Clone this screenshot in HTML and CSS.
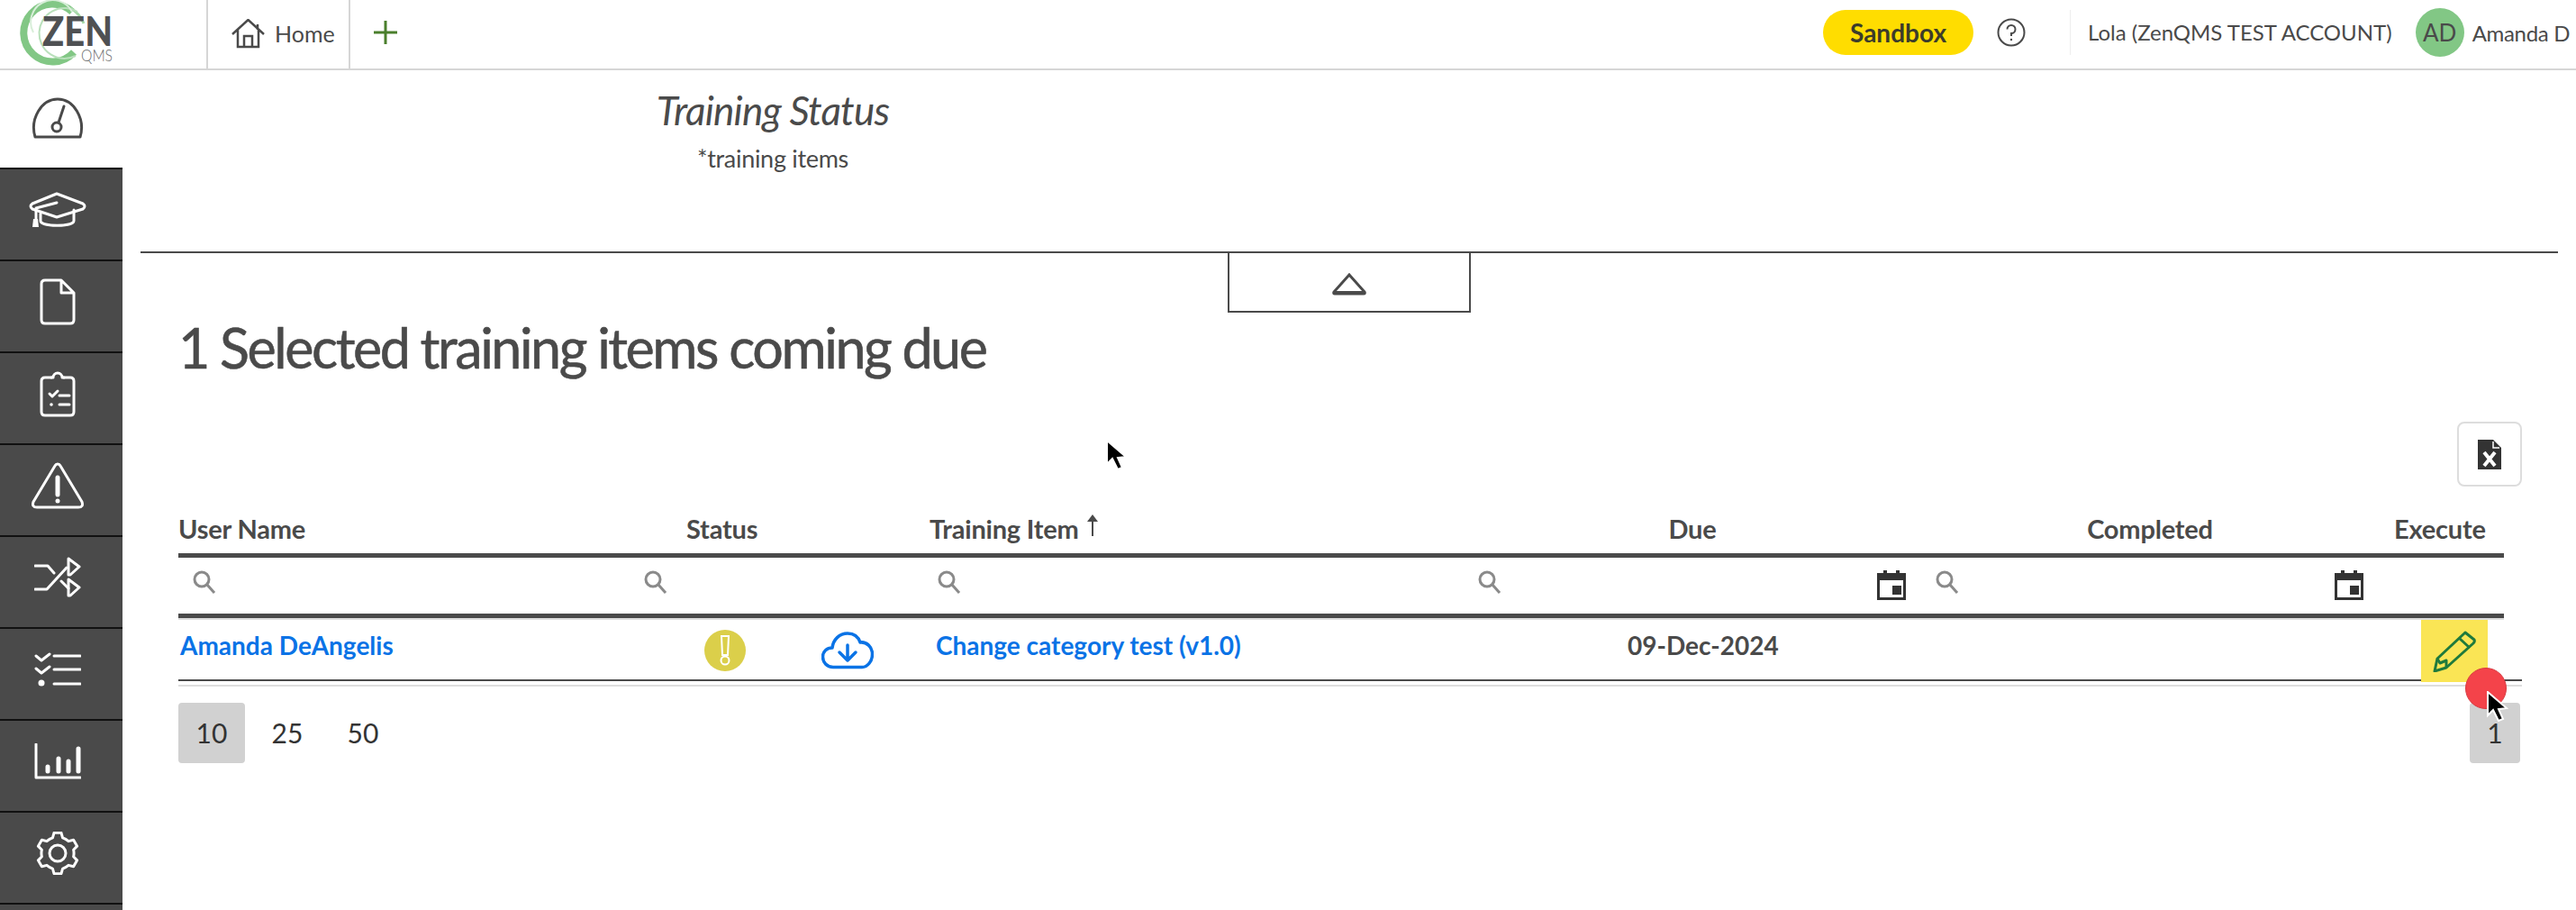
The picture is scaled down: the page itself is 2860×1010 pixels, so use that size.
FILE: index.html
```html
<!DOCTYPE html>
<html lang="en">
<head>
<meta charset="utf-8">
<title>Training Status</title>
<link rel="stylesheet" href="styles.css">
</head>
<body>
<header class="topbar">
  <div class="logo">
    <svg class="logo-mark" width="130" height="74" viewBox="0 0 130 74">
      <path class="ring-a" d="M80 13 A32 32 0 1 0 82 58"/>
      <path class="ring-d" d="M78 9 A33 33 0 0 1 93 26"/>
      <path class="ring-b" d="M86 13 A28 28 0 1 0 84 62"/>
      <path class="ring-c" d="M80 13 A24 24 0 0 0 37 36"/>
      <text class="logo-zen" x="47" y="51" textLength="78" lengthAdjust="spacingAndGlyphs">ZEN</text>
      <text class="logo-qms" x="90" y="68" textLength="35" lengthAdjust="spacingAndGlyphs">QMS</text>
    </svg>
  </div>
  <div class="tab">
    <svg class="tab-icon" width="37" height="33" viewBox="0 0 37 33"><path d="M1 17 L18.500 1 L36 17 M7 12 V31 H30 V12 M14 31 V19 H23 V31 M29 6 V12"/></svg>
    <span>Home</span>
  </div>
  <div class="tab-add">
    <svg width="28" height="28" viewBox="0 0 28 28"><path d="M14 1 V27 M1 14 H27"/></svg>
  </div>
  <div class="top-right">
    <span class="sandbox">Sandbox</span>
    <svg class="help" width="32" height="32" viewBox="0 0 32 32"><circle cx="16" cy="16" r="14.5"/><path d="M11.500 12.500 A4.500 4.500 0 1 1 16 17 V20"/><circle class="help-dot" cx="16" cy="24" r="1.200"/></svg>
    <span class="account">Lola (ZenQMS TEST ACCOUNT)</span>
    <span class="avatar">AD</span>
    <span class="username">Amanda D</span>
  </div>
</header>

<div class="layout">
  <nav class="sidebar">
    <div class="nav-home">
      <svg class="ico-dark" width="58" height="46" viewBox="0 0 58 46"><path d="M4 44 C-2 24 11 2 29 2 C47 2 60 24 54 44 Z"/><circle cx="28" cy="33" r="5"/><path d="M30 28 L36 10"/></svg>
    </div>
    <div class="nav-item">
      <svg class="ico" width="64" height="40" viewBox="0 0 64 40"><path d="M31 2 L60 13 Q64 16 60 19 L31 28 L4 19 Q0 16 4 13 Z"/><path d="M31 12 L8 18 V36"/><path d="M13 24 V32 C13 39 50 39 50 32 V20"/><path class="fill" d="M5 30 H10 L11 39 H4 Z"/></svg>
    </div>
    <div class="nav-item">
      <svg class="ico" width="40" height="52" viewBox="0 0 40 52"><path d="M24 2 H6 Q2 2 2 6 V46 Q2 50 6 50 H34 Q38 50 38 46 V16 Z M24 2 V16 H38"/></svg>
    </div>
    <div class="nav-item">
      <svg class="ico" width="40" height="52" viewBox="0 0 40 52"><path d="M13 8 H6 Q2 8 2 12 V46 Q2 50 6 50 H34 Q38 50 38 46 V12 Q38 8 34 8 H27"/><path d="M13 8 H15 A5 5 0 0 1 25 8 H27"/><path d="M11 26 L14 29 L20 23 M22 28 H33 M22 38 H33"/><circle class="fill" cx="13" cy="38" r="1.800"/></svg>
    </div>
    <div class="nav-item">
      <svg class="ico" width="58" height="52" viewBox="0 0 58 52"><path d="M29 2 Q31 2 32 4 L56 44 Q58 50 52 50 H6 Q0 50 2 44 L26 4 Q27 2 29 2 Z"/><path class="thick" d="M29 17 V36"/><circle class="fill" cx="29" cy="43" r="2.500"/></svg>
    </div>
    <div class="nav-item">
      <svg class="ico" width="52" height="46" viewBox="0 0 52 46"><path d="M1 10 H15 L22 18 M1 36 H14 L36 12 M30 27 L38 35"/><path d="M38 2 L50 11 L40 20 L38 20 Z M38 25 L50 34 L40 43 L38 43 Z"/></svg>
    </div>
    <div class="nav-item">
      <svg class="ico" width="52" height="40" viewBox="0 0 52 40"><path d="M2 5 L8 10 L17 3 M2 19 L8 24 L17 17 M22 5 H51 M22 20 H51 M22 36 H51"/><circle class="fill" cx="8" cy="35" r="3.500"/></svg>
    </div>
    <div class="nav-item">
      <svg class="ico" width="52" height="40" viewBox="0 0 52 40"><path d="M2 1 V38 H51"/><path class="thick" d="M15 26 V31 M27 17 V31 M38 20 V31 M49 6 V31"/></svg>
    </div>
    <div class="nav-item">
      <svg class="ico" width="48" height="48" viewBox="0 0 48 48"><path d="M18.440 6.880 L20.010 1.350 H27.990 L29.560 6.880 Q33 8 36.040 10.620 L41.620 9.220 L45.610 16.130 L41.610 20.260 Q42.500 24 41.610 27.740 L45.610 31.870 L41.620 38.780 L36.040 37.380 Q33 40 29.560 41.120 L27.990 46.650 H20.010 L18.440 41.120 Q15 40 11.960 37.380 L6.380 38.780 L2.390 31.870 L6.390 27.740 Q5.500 24 6.390 20.260 L2.390 16.130 L6.380 9.220 L11.960 10.620 Q15 8 18.440 6.880 Z"/><circle cx="24" cy="24" r="9"/></svg>
    </div>
    <div class="nav-item"></div>
  </nav>

  <main class="main">
    <section class="panel">
      <div class="chart-head">
        <h2 class="chart-title">Training Status</h2>
        <p class="chart-sub">*training items</p>
      </div>
    </section>
    <button class="collapse" type="button" aria-label="Collapse">
      <svg width="40" height="26" viewBox="0 0 40 26"><path d="M20 3 L37 22 Q38 24 36 24 H4 Q2 24 3 22 Z"/><path class="fill" d="M2 21 H38 V25 H2 Z"/></svg>
    </button>

    <section class="content">
      <h1 class="heading">1 Selected training items coming due</h1>
      <div class="toolbar">
        <button class="excel" type="button" aria-label="Export">
          <svg width="26" height="33" viewBox="0 0 26 33"><path class="excel-doc" d="M0 0 H17 L26 9 V33 H0 Z"/><path class="excel-fold" d="M17 2 V9 H24"/><path class="excel-x" d="M7 14 L19 29 M19 14 L7 29"/></svg>
        </button>
      </div>

      <div class="grid-row head-row">
        <div class="th">User Name</div>
        <div class="th th-status">Status</div>
        <div class="th th-item">Training Item <svg class="sort" width="12" height="24" viewBox="0 0 12 24"><path d="M6 24 V6"/><path class="fill" d="M6 0 L12 8 H0 Z"/></svg></div>
        <div class="th th-center">Due</div>
        <div class="th th-center">Completed</div>
        <div class="th th-exec">Execute</div>
      </div>

      <div class="grid-row filter-row">
        <div class="filter"><svg class="search" width="26" height="26" viewBox="0 0 26 26"><circle cx="10" cy="10" r="8"/><path d="M16 16 L24 25"/></svg></div>
        <div class="filter"><svg class="search" width="26" height="26" viewBox="0 0 26 26"><circle cx="10" cy="10" r="8"/><path d="M16 16 L24 25"/></svg></div>
        <div class="filter"><svg class="search" width="26" height="26" viewBox="0 0 26 26"><circle cx="10" cy="10" r="8"/><path d="M16 16 L24 25"/></svg></div>
        <div class="filter filter-date"><svg class="search" width="26" height="26" viewBox="0 0 26 26"><circle cx="10" cy="10" r="8"/><path d="M16 16 L24 25"/></svg><svg class="cal" width="34" height="34" viewBox="0 0 34 34"><path d="M1 3 H8 V0 H12 V3 H22 V0 H26 V3 H33 V33 H1 Z M4 11 V30 H30 V11 Z M18 17 H28 V27 H18 Z" fill-rule="evenodd"/></svg></div>
        <div class="filter filter-date"><svg class="search" width="26" height="26" viewBox="0 0 26 26"><circle cx="10" cy="10" r="8"/><path d="M16 16 L24 25"/></svg><svg class="cal" width="34" height="34" viewBox="0 0 34 34"><path d="M1 3 H8 V0 H12 V3 H22 V0 H26 V3 H33 V33 H1 Z M4 11 V30 H30 V11 Z M18 17 H28 V27 H18 Z" fill-rule="evenodd"/></svg></div>
        <div class="filter"></div>
      </div>

      <div class="grid-row body-row">
        <div class="td"><a class="link" href="#">Amanda DeAngelis</a></div>
        <div class="td td-status">
          <span class="status-dot"><svg width="16" height="36" viewBox="0 0 16 36"><path d="M4 2 H12 L11 23 H5 Z"/><circle cx="8" cy="29" r="4.500"/></svg></span>
          <svg class="cloud" width="58" height="42" viewBox="0 0 58 42"><path d="M13 39.500 C6 39.500 1.500 34 1.500 28 C1.500 22 6 18 12 18 C13 9 20 2 29 2 C36 2 41 6 43 12 C50 11 56.500 17 56.500 25 C56.500 33 51 39.500 45 39.500 Z"/><path d="M29 15 V32 M20 23 L29 32 L38 23"/></svg>
        </div>
        <div class="td td-item"><a class="link" href="#">Change category test (v1.0)</a></div>
        <div class="td td-due">09-Dec-2024</div>
        <div class="td"></div>
        <div class="td td-exec">
          <span class="exec-btn"><svg width="48" height="46" viewBox="0 0 48 46"><path d="M36 2 L46 10 Q47 12 45 14 L15 41 L2 45 L5 31 L35 3 Q36 2 36 2 Z"/><path d="M29 8 L41 19 M5 31 L8 36 L15 33 L15 41"/></svg></span>
        </div>
      </div>
      <div class="row-end"></div>

      <div class="pager">
        <div class="sizes">
          <span class="page page-on">10</span>
          <span class="page">25</span>
          <span class="page">50</span>
        </div>
        <span class="page page-on page-one">1</span>
      </div>
    </section>
  </main>
</div>

<svg class="cursor cursor-mid" width="25" height="36" viewBox="0 0 25 36"><path d="M2 1 V27 L8 21 L14 33 L19 31 L14 20 L23 19 Z"/></svg>
<div class="click-dot"></div>
<svg class="cursor cursor-click" width="25" height="36" viewBox="0 0 25 36"><path d="M2 1 V27 L8 21 L14 33 L19 31 L14 20 L23 19 Z"/></svg>
</body>
</html>
```

FILE: styles.css
```css
* { box-sizing: border-box; }
html, body { margin: 0; padding: 0; }
body {
  width: 2860px;
  height: 1010px;
  overflow: hidden;
  background: #fff;
  color: #4a4a4a;
  font-family: Lato, "Open Sans", sans-serif;
  position: relative;
}

.topbar {
  height: 78px;
  display: flex;
  align-items: stretch;
  border-bottom: 2px solid #d6d6d6;
  overflow: hidden;
}
.logo { width: 229px; flex: none; }
.logo-mark { display: block; }
.ring-a { fill: none; stroke: #82c785; stroke-width: 8; }
.ring-d { fill: none; stroke: #a5d8a7; stroke-width: 3; }
.ring-b { fill: none; stroke: #b9e0bb; stroke-width: 2; }
.ring-c { fill: none; stroke: #d8eed9; stroke-width: 2; }
.logo-zen { font: 900 45px Lato, sans-serif; fill: #4f5153; }
.logo-qms { font: 300 18px Lato, sans-serif; fill: #6a6c6e; }

.tab {
  width: 160px;
  flex: none;
  height: 78px;
  display: flex;
  align-items: center;
  gap: 11px;
  padding: 0 0 4px 26px;
  border-left: 2px solid #d6d6d6;
  border-right: 2px solid #d6d6d6;
  background: #fff;
  font-size: 25px;
  position: relative;
}
.tab-icon { fill: none; stroke: #4a4a4a; stroke-width: 2.500; flex: none; }
.tab-add { display: flex; align-items: center; padding: 0 0 4px 25px; }
.tab-add path { stroke: #4a7f2c; stroke-width: 3; fill: none; }

.top-right {
  margin-left: auto;
  display: flex;
  align-items: center;
  padding-bottom: 4px;
  width: 836px;
  flex: none;
  font-size: 24px;
  white-space: nowrap;
  overflow: hidden;
}
.sandbox {
  width: 167px;
  height: 50px;
  border-radius: 25px;
  background: #ffdd00;
  color: #3c3c2a;
  font-weight: 700;
  font-size: 28px;
  display: flex;
  align-items: center;
  justify-content: center;
  flex: none;
}
.help { margin-left: 26px; flex: none; fill: none; stroke: #4a4a4a; stroke-width: 2; }
.help-dot { fill: #4a4a4a; stroke: none; }
.account {
  margin-left: 49px;
  padding-left: 19px;
  border-left: 1px solid #eee;
  line-height: 50px;
  flex: none;
}
.avatar {
  width: 54px;
  height: 54px;
  margin-left: 26px;
  border-radius: 50%;
  background: #82c785;
  display: flex;
  align-items: center;
  justify-content: center;
  flex: none;
  font-size: 26px;
}
.username { margin-left: 9px; flex: none; letter-spacing: -0.3px; }

.layout { display: flex; height: 932px; }
.sidebar { width: 136px; flex: none; height: 932px; overflow: hidden; }
.nav-home {
  height: 108px;
  display: flex;
  align-items: center;
  justify-content: center;
  padding: 0 8px 2px 0;
}
.nav-item {
  height: 102px;
  background: #4a4a4a;
  border-top: 2px solid #111;
  display: flex;
  align-items: center;
  justify-content: center;
  padding: 0 8px 10px 0;
}
.ico, .ico-dark { fill: none; stroke-width: 3; stroke-linecap: round; stroke-linejoin: round; }
.ico { stroke: #fff; }
.ico-dark { stroke: #4a4a4a; }
.ico .fill { fill: #fff; stroke: none; }
.ico .thick { stroke-width: 5; }

.main { flex: 1; min-width: 0; }
.panel {
  margin: 0 20px 0 20px;
  height: 203px;
  border-bottom: 2px solid #4a4a4a;
}
.chart-head { width: 1404px; text-align: center; padding-top: 19px; }
.chart-title { margin: 0; font-size: 44px; line-height: 50px; font-weight: 400; font-style: italic; letter-spacing: -0.8px; }
.chart-sub { margin: 13px 0 0; font-size: 27px; line-height: 32px; letter-spacing: -0.3px; }

.collapse {
  display: flex;
  align-items: center;
  justify-content: center;
  margin: 0 auto;
  width: 270px;
  height: 66px;
  padding: 4px 0 0;
  background: #fff;
  border: 2px solid #4a4a4a;
  border-top: 0;
}
.collapse svg { fill: none; stroke: #4a4a4a; stroke-width: 3; }
.collapse .fill { fill: #4a4a4a; stroke: none; }

.content { margin-left: 62px; width: 2602px; }
.heading { margin: 2px 0 0; font-size: 61px; line-height: 74px; font-weight: 400; letter-spacing: -2.45px; -webkit-text-stroke: 0.6px #4a4a4a; }
.toolbar { display: flex; justify-content: flex-end; margin-top: 45px; }
.excel {
  width: 72px;
  height: 72px;
  background: #fff;
  border: 2px solid #ddd;
  border-radius: 8px;
  padding: 0;
  display: flex;
  align-items: center;
  justify-content: center;
}
.excel-doc { fill: #333; }
.excel-fold { fill: none; stroke: #fff; stroke-width: 1.500; }
.excel-x { stroke: #fff; stroke-width: 4; fill: none; }

.grid-row {
  display: grid;
  grid-template-columns: 501px 326px 600px 508px 508px 139px;
  width: 2582px;
}
.head-row {
  height: 79px;
  padding-top: 29px;
  border-bottom: 5px solid #4a4a4a;
  font-size: 29px;
  font-weight: 700;
  line-height: 36px;
  letter-spacing: -0.2px;
}
.th { white-space: nowrap; }
.th-status { padding-left: 63px; }
.th-item { padding-left: 7px; }
.sort { position: relative; top: -3px; left: 2px; fill: none; stroke: #4a4a4a; stroke-width: 2; }
.sort .fill { fill: #4a4a4a; stroke: none; }
.th-center { text-align: center; }
.th-exec { padding-left: 17px; }

.filter-row {
  height: 67px;
  border-bottom: 5px solid #4a4a4a;
  box-shadow: 0 2px 0 #ddd;
}
.filter { display: flex; align-items: center; justify-content: space-between; padding: 0 16px 8px 16px; }
.search { fill: none; stroke: #8a8a8a; stroke-width: 3; flex: none; }
.cal { fill: #333; flex: none; position: relative; top: 4px; }

.body-row {
  width: 2602px;
  height: 70px;
  border-bottom: 2px solid #4a4a4a;
  grid-template-columns: 514px 326px 600px 508px 508px 146px;
  font-size: 28px;
  font-weight: 700;
}
.td { display: flex; align-items: center; padding: 0 0 11px 2px; white-space: nowrap; }
.link { color: #0a73e6; text-decoration: none; }
.td-status { padding: 0 0 0 70px; gap: 84px; }
.status-dot {
  width: 46px;
  height: 46px;
  border-radius: 50%;
  background: #dbcf4a;
  display: flex;
  align-items: center;
  justify-content: center;
  flex: none;
}
.status-dot svg { fill: none; stroke: #fff; stroke-width: 2; }
.cloud { fill: none; stroke: #0a73e6; stroke-width: 3.500; stroke-linejoin: round; stroke-linecap: round; flex: none; }
.td-item { padding-left: 1px; }
.td-due { padding-left: 169px; }
.td-exec { padding: 2px 0 0 34px; align-items: flex-start; }
.exec-btn {
  width: 74px;
  height: 69px;
  background: #fae555;
  display: flex;
  align-items: center;
  justify-content: center;
}
.exec-btn svg { fill: none; stroke: #1f7a3c; stroke-width: 3; stroke-linejoin: round; }
.row-end { height: 6px; border-bottom: 2px solid #ddd; }

.pager {
  display: flex;
  justify-content: space-between;
  align-items: flex-start;
  margin-top: 18px;
  padding-right: 2px;
}
.sizes { display: flex; gap: 10px; }
.page {
  width: 74px;
  height: 67px;
  border-radius: 4px;
  display: flex;
  align-items: center;
  justify-content: center;
  padding-bottom: 2px;
  font-size: 30px;
  color: #333;
}
.page-on { background: #d1d1d1; }
.page-one { width: 56px; }

.cursor { position: absolute; fill: #000; stroke: #fff; stroke-width: 2; }
.cursor-mid { left: 1227px; top: 488px; }
.cursor-click { left: 2760px; top: 767px; }
.click-dot {
  position: absolute;
  left: 2737px;
  top: 741px;
  width: 46px;
  height: 46px;
  border-radius: 50%;
  background: #f4434a;
  border: 1px solid #d8393f;
}
```
